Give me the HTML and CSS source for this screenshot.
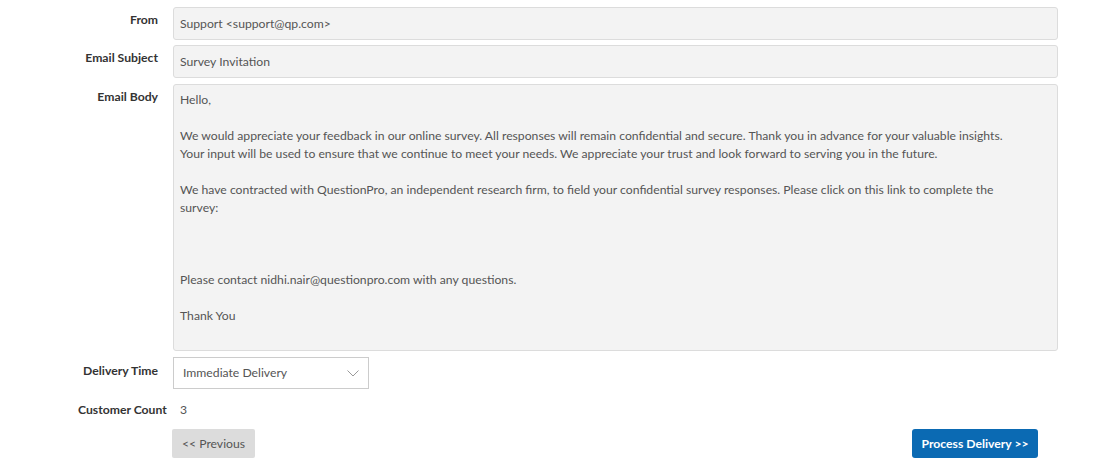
FILE: index.html
```html
<!DOCTYPE html>
<html>
<head>
<meta charset="utf-8">
<link rel="stylesheet" href="styles.css">
</head>
<body>
<div class="form">
  <div class="row">
    <div class="label">From</div>
    <div class="field input">Support &lt;support@qp.com&gt;</div>
  </div>
  <div class="row">
    <div class="label">Email Subject</div>
    <div class="field input">Survey Invitation</div>
  </div>
  <div class="row body-row">
    <div class="label">Email Body</div>
    <div class="field textarea"><p>Hello,</p><p class="blank"></p><p>We would appreciate your feedback in our online survey. All responses will remain confidential and secure. Thank you in advance for your valuable insights.</p><p>Your input will be used to ensure that we continue to meet your needs. We appreciate your trust and look forward to serving you in the future.</p><p class="blank"></p><p>We have contracted with QuestionPro, an independent research firm, to field your confidential survey responses. Please click on this link to complete the</p><p>survey:</p><p class="blank"></p><p class="blank"></p><p class="blank"></p><p>Please contact nidhi.nair@questionpro.com with any questions.</p><p class="blank"></p><p>Thank You</p></div>
  </div>
  <div class="row">
    <div class="label sel-label">Delivery Time</div>
    <div class="select">
      <span>Immediate Delivery</span>
      <svg class="chev" width="12" height="7" viewBox="0 0 12 7"><path d="M0.5 0.5 L6 6 L11.5 0.5" fill="none" stroke="#9a9a9a" stroke-width="1"/></svg>
    </div>
  </div>
  <div class="row count-row">
    <div class="label">Customer Count</div>
    <div class="value">3</div>
  </div>
  <div class="actions">
    <button class="btn prev">&lt;&lt; Previous</button>
    <button class="btn primary">Process Delivery &gt;&gt;</button>
  </div>
</div>
</body>
</html>
```

FILE: styles.css
```css
html, body {
  margin: 0;
  padding: 0;
  background: #ffffff;
}
body {
  font-family: "Lato", "Roboto", "Liberation Sans", sans-serif;
  font-size: 12.2px;
  color: #555555;
}
.form {
  padding: 7px 0 0 78px;
  width: 980px;
}
.row {
  display: grid;
  grid-template-columns: 80px 885px;
  column-gap: 15px;
  margin-bottom: 5px;
}
.body-row {
  margin-top: 6px;
  margin-bottom: 6px;
}
.label {
  text-align: right;
  white-space: nowrap;
  font-weight: 700;
  color: #333333;
  padding-top: 4px;
  line-height: 18px;
}
.field {
  box-sizing: border-box;
  background: #f3f3f3;
  border: 1px solid #dcdcdc;
  border-radius: 3px;
  color: #555555;
  padding: 0 6px;
}
.input {
  height: 33px;
  line-height: 31px;
}
.textarea {
  height: 267px;
  padding-top: 6px;
}
.textarea p {
  margin: 0;
  line-height: 18px;
  white-space: nowrap;
}
.textarea p.blank {
  height: 18px;
}
.select {
  box-sizing: border-box;
  width: 196px;
  height: 32px;
  border: 1px solid #cccccc;
  background: #ffffff;
  display: flex;
  align-items: center;
  justify-content: space-between;
  padding: 0 9px 1px 9px;
  color: #555555;
}
.chev {
  display: block;
  margin-top: 2px;
}
.sel-label {
  padding-top: 5px;
}
.count-row {
  margin-top: 6px;
  margin-bottom: 10px;
}
.count-row .label {
  padding-top: 6px;
}
.value {
  padding: 6px 0 0 7px;
  line-height: 18px;
}
.actions {
  display: flex;
  justify-content: space-between;
  padding-left: 94px;
  width: 866px;
}
.btn {
  font-family: inherit;
  font-size: 12.2px;
  height: 29px;
  border: none;
  border-radius: 2px;
  cursor: pointer;
}
.prev {
  width: 83px;
  background: #dcdcdc;
  color: #555555;
}
.primary {
  width: 126px;
  background: #0b6ab3;
  color: #ffffff;
  font-weight: 700;
  border-radius: 3px;
}
```
